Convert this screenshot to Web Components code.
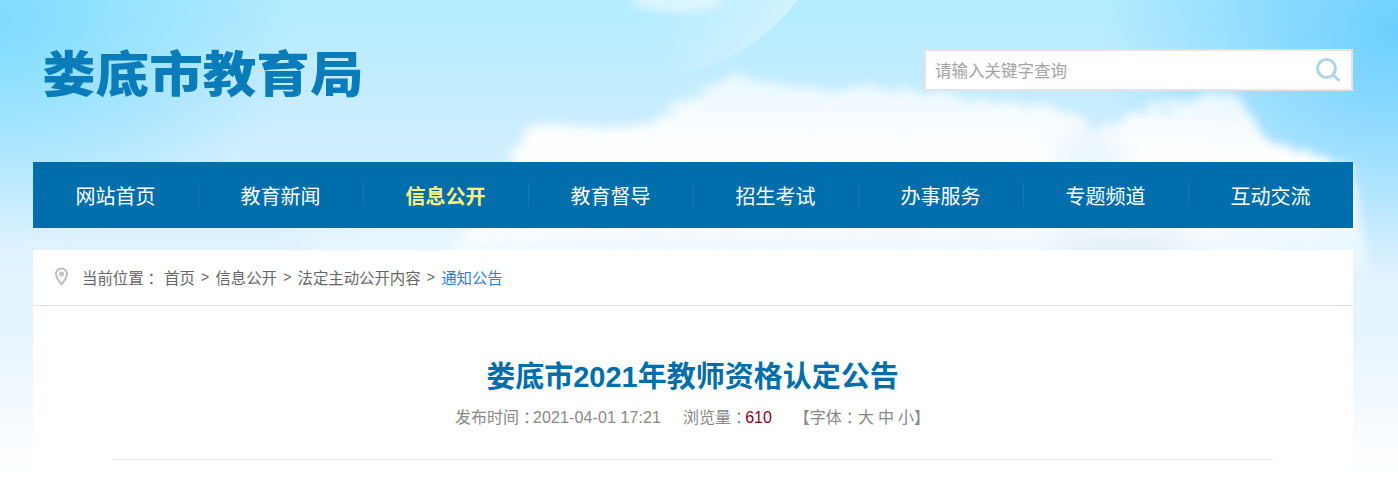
<!DOCTYPE html>
<html lang="zh">
<head>
<meta charset="utf-8">
<title>娄底市教育局</title>
<style>
  html, body { margin: 0; padding: 0; height: 488px; overflow: hidden; }
  body { font-family: "Liberation Sans", "Noto Sans CJK SC", sans-serif; background: #fff; }
</style>
</head>
<body>
<sky-page>
  <site-header></site-header>
  <main-nav active="信息公开"></main-nav>
  <bread-crumb></bread-crumb>
  <article-head title-text="娄底市2021年教师资格认定公告" date="2021-04-01 17:21" views="610"></article-head>
</sky-page>

<script>
const FONT = '"Liberation Sans", "Noto Sans CJK SC", sans-serif';
// full-width colon sits in the middle of its em box in the reference
const COLON = '<span class="c">：</span>';
const COLON_CSS = '.c { padding-left: .25em; letter-spacing: -.37em; }';

class SkyPage extends HTMLElement {
  constructor() {
    super();
    this.attachShadow({ mode: 'open' }).innerHTML = `
      <style>
        :host { display: block; position: relative; width: 1398px; height: 488px; overflow: hidden; }
        .sky {
          position: absolute; inset: 0;
          background:
            linear-gradient(180deg, rgba(255,255,255,0) 0, rgba(255,255,255,0) 330px, #fff 475px),
            radial-gradient(300px 230px at 0 20px, #7fdcff 0, rgba(127,220,255,0) 100%),
            radial-gradient(300px 250px at 1398px 30px, #6ccfff 0, rgba(108,207,255,0) 100%),
            linear-gradient(180deg, #b4ecff 0, #c4ecff 90px, #d8f0ff 190px, #e6f4ff 300px);
        }
        svg { position: absolute; left: 0; top: 0; }
        .wrap { position: relative; width: 1320px; margin-left: 33px; }
      </style>
      <div class="sky"></div>
      <svg width="1398" height="488" viewBox="0 0 1398 488">
        <defs>
          <filter id="cloud" x="-5%" y="-20%" width="110%" height="140%">
            <feTurbulence type="fractalNoise" baseFrequency="0.05 0.12" numOctaves="4" seed="7" result="n"/>
            <feDisplacementMap in="SourceGraphic" in2="n" scale="20" result="d"/>
            <feGaussianBlur in="d" stdDeviation="5"/>
          </filter>
          <filter id="soft" x="-40%" y="-80%" width="180%" height="260%"><feGaussianBlur stdDeviation="12"/></filter>
          <filter id="s" x="-40%" y="-100%" width="180%" height="300%"><feGaussianBlur stdDeviation="4"/></filter>
          <linearGradient id="disc" x1="0.55" y1="0" x2="0.92" y2="0">
            <stop offset="0" stop-color="#fff" stop-opacity="0"/>
            <stop offset="1" stop-color="#fff" stop-opacity=".42"/>
          </linearGradient>
          <linearGradient id="fade" x1="0" y1="0" x2="0" y2="1">
            <stop offset="0" stop-color="#fff" stop-opacity=".6"/>
            <stop offset="0.3" stop-color="#fff" stop-opacity=".92"/>
            <stop offset="0.5" stop-color="#fff"/>
            <stop offset="0.75" stop-color="#fff" stop-opacity=".8"/>
            <stop offset="1" stop-color="#fff" stop-opacity=".3"/>
          </linearGradient>
        </defs>
        <circle cx="640" cy="-120" r="198" fill="url(#disc)"/>
        <ellipse cx="676" cy="0" rx="46" ry="12" fill="#fff" opacity=".5" filter="url(#s)"/>
        <path filter="url(#cloud)" fill="url(#fade)" d="M510 168 L528 128 L556 124 L630 130 L655 120 L680 100 L710 87 L740 73 L780 85 L813 85 L837 92 L885 87 L921 93 L975 100 L1040 105 L1079 113 L1091 133 L1145 110 L1190 100 L1236 93 L1248 110 L1266 140 L1308 153 L1350 165 L1370 270 L440 270 Z"/>
        <ellipse cx="440" cy="244" rx="150" ry="20" fill="#fff" opacity=".3" filter="url(#soft)"/>
        <ellipse cx="1090" cy="160" rx="36" ry="34" fill="#d6eefc" opacity=".45" filter="url(#soft)"/>
        <ellipse cx="1120" cy="246" rx="70" ry="14" fill="#cfdfe8" opacity=".4" filter="url(#soft)"/>
      </svg>
      <div class="wrap"><slot></slot></div>`;
  }
}

class SiteHeader extends HTMLElement {
  constructor() {
    super();
    this.attachShadow({ mode: 'open' }).innerHTML = `
      <style>
        :host { display: flex; justify-content: space-between; height: 162px; font-family: ${FONT}; }
        .logo {
          margin: 35px 0 0 9px; height: 72px; line-height: 72px;
          font-size: 53.6px; font-weight: 900; color: #0a7cb9;
          white-space: nowrap; font-family: "Noto Sans CJK SC", sans-serif;
          filter: blur(.4px); transform: scaleY(.92);
        }
        .search {
          box-sizing: border-box; display: flex; align-items: center; justify-content: space-between;
          width: 429px; height: 42px; margin-top: 49px; padding: 0 11px 0 9px;
          background: #fff; border: 2px solid #e4e4e4;
          font-size: 16.5px; color: #a4a4a4;
        }
        svg { display: block; }
      </style>
      <div class="logo">娄底市教育局</div>
      <div class="search">
        <span>请输入关键字查询</span>
        <svg width="24" height="24" viewBox="0 0 24 24" fill="none" stroke="#acd5ea" stroke-width="3">
          <circle cx="10.5" cy="10.5" r="9"/>
          <path d="M17 17 L22.5 22" stroke-linecap="round"/>
        </svg>
      </div>`;
  }
}

class MainNav extends HTMLElement {
  constructor() {
    super();
    const items = ['网站首页', '教育新闻', '信息公开', '教育督导', '招生考试', '办事服务', '专题频道', '互动交流'];
    const active = this.getAttribute('active');
    this.attachShadow({ mode: 'open' }).innerHTML = `
      <style>
        :host { display: grid; grid-template-columns: repeat(8, 165px); height: 66px; background: #006eab; font-family: ${FONT}; }
        .item { display: flex; align-items: center; justify-content: center; position: relative; color: #fff; font-size: 20px; }
        .item + .item::before { content: ""; position: absolute; left: 0; top: 21px; height: 24px; width: 1px; background: #0a7dbb; }
        .on { color: #fff17f; font-weight: 700; }
      </style>
      ${items.map(t => `<div class="item${t === active ? ' on' : ''}">${t}</div>`).join('')}`;
  }
}

class BreadCrumb extends HTMLElement {
  constructor() {
    super();
    const links = ['首页', '信息公开', '法定主动公开内容'];
    this.attachShadow({ mode: 'open' }).innerHTML = `
      <style>
        :host {
          display: flex; align-items: center; box-sizing: border-box; height: 56px; margin-top: 22px;
          padding: 0 0 2px 21px; background: #fff; border-bottom: 1px solid #e3e3e3;
          font-family: ${FONT}; font-size: 15.4px; color: #666;
        }
        svg { margin-right: 13px; display: block; }
        .label { margin-right: 7px; }
        .sep { width: 20.5px; text-align: center; font-size: 14px; }
        .cur { color: #2f7fd3; }
        ${COLON_CSS}
      </style>
      <svg width="15" height="19" viewBox="0 0 15 19" fill="none" stroke="#bdbdbd" stroke-width="2">
        <path d="M7.5 17.5 C4 13 2 10 2 7 A5.5 5.5 0 0 1 13 7 C13 10 11 13 7.5 17.5 Z"/>
        <circle cx="7.5" cy="7" r="1.5"/>
      </svg>
      <span class="label">当前位置${COLON}</span>
      ${links.map(t => `<span>${t}</span><span class="sep">&gt;</span>`).join('')}
      <span class="cur">通知公告</span>`;
  }
}

class ArticleHead extends HTMLElement {
  constructor() {
    super();
    this.attachShadow({ mode: 'open' }).innerHTML = `
      <style>
        :host { display: block; background: #fff; height: 183px; padding: 0 80px 0 79px; font-family: ${FONT}; }
        .inner { height: 153px; border-bottom: 1px solid #e3e3e3; text-align: center; }
        h1 { margin: 0; padding-top: 51px; font-size: 29px; line-height: 40px; font-weight: 700; color: #006eab; }
        .meta { display: flex; justify-content: center; margin: 10px 0 0 0; font-size: 16px; line-height: 22px; color: #888; white-space: pre; }
        .date { letter-spacing: .1px; }
        .gap { margin-left: 22px; }
        .num { color: #8b0020; }
        .first { margin-left: 2px; }
        .size { margin-left: 4px; }
        ${COLON_CSS}
      </style>
      <div class="inner">
        <h1>${this.getAttribute('title-text')}</h1>
        <div class="meta"><span>发布时间${COLON}<span class="date">${this.getAttribute('date')}</span></span><span class="gap">浏览量${COLON}<span class="num">${this.getAttribute('views')}</span></span><span class="gap">【字体${COLON}<span class="first">大</span><span class="size">中</span><span class="size">小</span>】</span></div>
      </div>`;
  }
}

customElements.define('sky-page', SkyPage);
customElements.define('site-header', SiteHeader);
customElements.define('main-nav', MainNav);
customElements.define('bread-crumb', BreadCrumb);
customElements.define('article-head', ArticleHead);
</script>
</body>
</html>
